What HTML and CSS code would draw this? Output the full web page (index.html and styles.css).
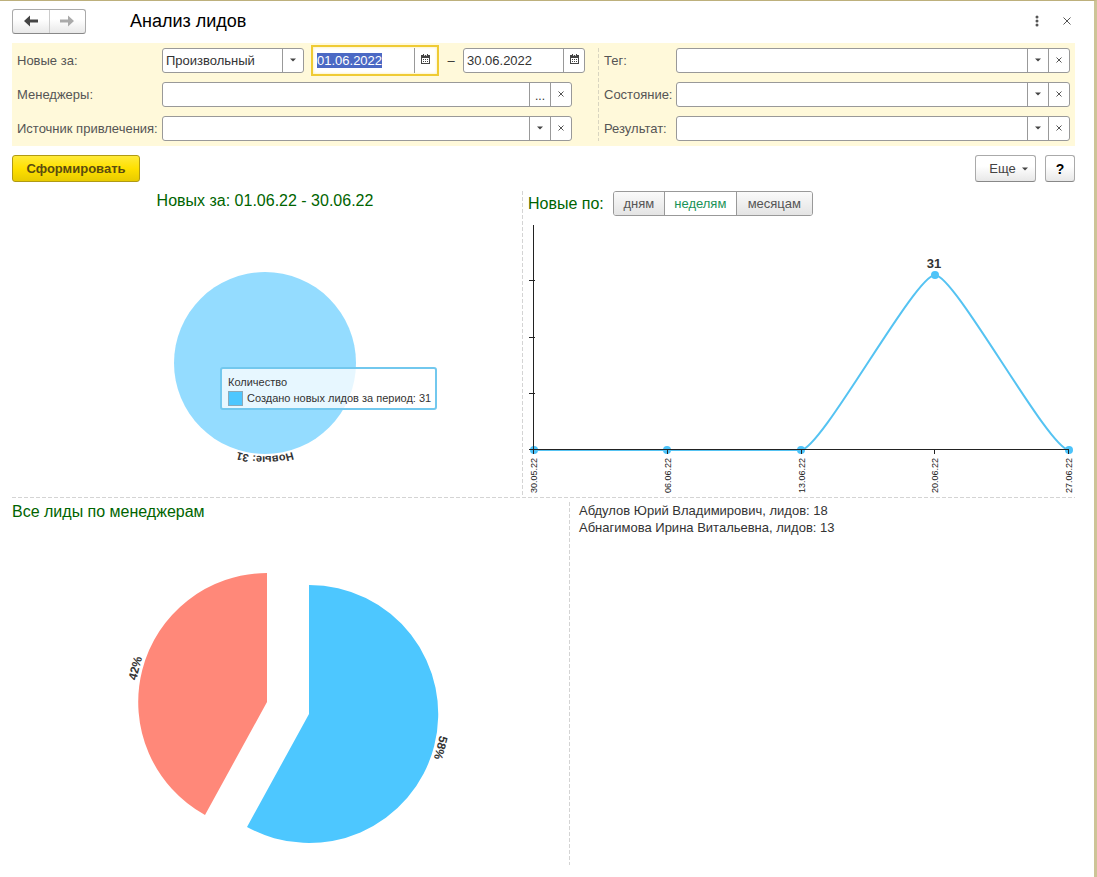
FILE: index.html
```
<!DOCTYPE html>
<html lang="ru">
<head>
  <meta charset="UTF-8" />
  <meta name="viewport" content="width=device-width, initial-scale=1" />
  <title>Анализ лидов</title>
  <link rel="stylesheet" href="styles.css">
</head>
<body>
  <!-- Icons -->
  <svg class="sprite" aria-hidden="true">
    <symbol id="i-down" viewBox="0 0 6 4"><path d="M0 0.5h6L3 3.5z" fill="#444" /></symbol>
    <symbol id="i-x" viewBox="0 0 6 6"><path d="M0.5 0.5l5 5M5.5 0.5l-5 5" stroke="#555" stroke-width="1" /></symbol>
    <symbol id="i-cal" viewBox="0 0 9 10">
      <path d="M0 1h9v9H0z" fill="#444" />
      <path d="M1 4h7v5H1z" fill="#fff" />
      <path d="M2 0h1v2H2zM6 0h1v2H6z" fill="#444" />
      <path d="M3 1h1v1H3zM5 1h1v1H5z" fill="#ccc" />
      <path d="M2 5h1v1H2zM4 5h1v1H4zM6 5h1v1H6zM2 7h1v1H2zM4 7h1v1H4zM6 7h1v1H6z" fill="#444" />
    </symbol>
    <symbol id="i-back" viewBox="0 0 14 12"><path d="M0 6L6 0.5V4.5H14V7.5H6V11.5z" fill="currentColor" /></symbol>
    <symbol id="i-forward" viewBox="0 0 14 12"><path d="M14 6L8 0.5V4.5H0V7.5H8V11.5z" fill="currentColor" /></symbol>
  </svg>

  <header class="header">
    <div class="nav">
      <button type="button" aria-label="Назад"><svg width="14" height="12"><use href="#i-back" /></svg></button>
      <button type="button" class="forward" aria-label="Вперед" disabled><svg width="14" height="12"><use href="#i-forward" /></svg></button>
    </div>
    <h1>Анализ лидов</h1>
    <button type="button" class="icon-btn" aria-label="Меню">
      <svg width="4" height="12" viewBox="0 0 4 12" fill="#555"><circle cx="2" cy="2" r="1.5" /><circle cx="2" cy="6" r="1.5" /><circle cx="2" cy="10" r="1.5" /></svg>
    </button>
    <button type="button" class="icon-btn" aria-label="Закрыть"><svg width="8" height="8" viewBox="0 0 8 8"><path d="M0.5 0.5l7 7M7.5 0.5l-7 7" stroke="#555" /></svg></button>
  </header>

  <!-- Filters -->
  <form class="filters">
    <div class="filter-col filter-left">
      <label for="period">Новые за:</label>
      <div class="period">
        <div class="field field-select">
          <select id="period"><option>Произвольный</option></select>
          <span class="cell"><svg width="6" height="4"><use href="#i-down" /></svg></span>
        </div>
        <div class="field field-date focused">
          <input type="text" id="date-from" value="01.06.2022" aria-label="Дата начала" />
          <button type="button" aria-label="Календарь"><svg width="9" height="10"><use href="#i-cal" /></svg></button>
        </div>
        <span class="dash">–</span>
        <div class="field field-date">
          <input type="text" value="30.06.2022" aria-label="Дата окончания" />
          <button type="button" aria-label="Календарь"><svg width="9" height="10"><use href="#i-cal" /></svg></button>
        </div>
      </div>

      <label for="managers">Менеджеры:</label>
      <div class="field field-wide">
        <input type="text" id="managers" />
        <button type="button" class="dots">...</button>
        <button type="button" aria-label="Очистить"><svg width="6" height="6"><use href="#i-x" /></svg></button>
      </div>

      <label for="source">Источник привлечения:</label>
      <div class="field field-wide">
        <input type="text" id="source" />
        <button type="button" aria-label="Выбрать"><svg width="6" height="4"><use href="#i-down" /></svg></button>
        <button type="button" aria-label="Очистить"><svg width="6" height="6"><use href="#i-x" /></svg></button>
      </div>
    </div>

    <div class="filter-col filter-right">
      <label for="tag">Тег:</label>
      <div class="field">
        <input type="text" id="tag" />
        <button type="button" aria-label="Выбрать"><svg width="6" height="4"><use href="#i-down" /></svg></button>
        <button type="button" aria-label="Очистить"><svg width="6" height="6"><use href="#i-x" /></svg></button>
      </div>

      <label for="state">Состояние:</label>
      <div class="field">
        <input type="text" id="state" />
        <button type="button" aria-label="Выбрать"><svg width="6" height="4"><use href="#i-down" /></svg></button>
        <button type="button" aria-label="Очистить"><svg width="6" height="6"><use href="#i-x" /></svg></button>
      </div>

      <label for="result">Результат:</label>
      <div class="field">
        <input type="text" id="result" />
        <button type="button" aria-label="Выбрать"><svg width="6" height="4"><use href="#i-down" /></svg></button>
        <button type="button" aria-label="Очистить"><svg width="6" height="6"><use href="#i-x" /></svg></button>
      </div>
    </div>
  </form>

  <div class="toolbar">
    <button type="button" class="btn primary">Сформировать</button>
    <button type="button" class="btn more">Еще <svg width="6" height="4"><use href="#i-down" /></svg></button>
    <button type="button" class="btn help">?</button>
  </div>

  <main>
    <!-- New leads -->
    <section class="row row-new">
      <div class="panel-pie">
        <h2>Новых за: 01.06.22 - 30.06.22</h2>
        <div class="pie-box">
          <svg class="chart" viewBox="0 0 506 280" role="img" aria-label="Новые: 31">
            <path id="pie-edge" d="M253 59a93 93 0 0 1 0 186a93 93 0 0 1 0 -186" fill="none" />
            <circle cx="253" cy="152" r="91" fill="#94dcff" />
            <text class="pie-label small"><textPath href="#pie-edge" startOffset="50%">Новые: 31</textPath></text>
          </svg>
          <div class="tooltip">
            <div>Количество</div>
            <div class="tooltip-line"><span class="swatch"></span>Создано новых лидов за период: 31</div>
          </div>
        </div>
      </div>

      <div class="panel-line">
        <div class="line-head">
          <h2>Новые по:</h2>
          <div class="switch">
            <button type="button">дням</button>
            <button type="button" class="active">неделям</button>
            <button type="button">месяцам</button>
          </div>
        </div>
        <svg class="chart" viewBox="0 0 547 270" role="img" aria-label="Новые по неделям">
          <g fill="#4cc3fa">
            <circle cx="6" cy="225" r="4" />
            <circle cx="139" cy="225" r="4" />
            <circle cx="273" cy="225" r="4" />
            <circle cx="407" cy="50" r="4" />
            <circle cx="541" cy="225" r="4" />
          </g>
          <path class="series" d="M6 225H273C293 225 387 50 407 50S521 225 541 225" />
          <path class="axis" d="M5.5 0V229M1 224.5H541M1 55.5H7M1 112.5H7M1 168.5H7M139.5 224V229M273.5 224V229M406.5 224V229M540.5 224V229" />
          <text class="value" x="406" y="43">31</text>
          <g class="ticks">
            <text transform="translate(9 233) rotate(-90)">30.05.22</text>
            <text transform="translate(143 233) rotate(-90)">06.06.22</text>
            <text transform="translate(277 233) rotate(-90)">13.06.22</text>
            <text transform="translate(410 233) rotate(-90)">20.06.22</text>
            <text transform="translate(544 233) rotate(-90)">27.06.22</text>
          </g>
        </svg>
      </div>
    </section>

    <!-- Leads by manager -->
    <section class="row row-managers">
      <div class="panel-share">
        <h2>Все лиды по менеджерам</h2>
        <svg class="chart" viewBox="0 0 557 343" role="img" aria-label="Доли менеджеров: 58% и 42%">
          <path d="M297 192V63A129 129 0 1 1 235 305z" fill="#4dc7ff" />
          <path d="M255 180V51A129 129 0 0 0 193 293z" fill="#ff8879" />
          <text class="pie-label" transform="translate(297 192) rotate(104.4) translate(0 -132)">58%</text>
          <text class="pie-label" transform="translate(255 180) rotate(284.4) translate(0 -132)">42%</text>
        </svg>
      </div>
      <ul class="managers">
        <li>Абдулов Юрий Владимирович, лидов: 18</li>
        <li>Абнагимова Ирина Витальевна, лидов: 13</li>
      </ul>
    </section>
  </main>

  <script>
    // Start with the first date ready for typing
    const dateFrom = document.getElementById("date-from");
    dateFrom.focus();
    dateFrom.select();
  </script>
</body>
</html>
```
FILE: styles.css
```
* {
  margin: 0;
  padding: 0;
  box-sizing: border-box;
}

body {
  min-height: 100vh;
  padding: 0 19px 12px 12px;
  border-top: 1px solid #bdb07c;
  border-right: 3px solid #cdc497;
  background: #fff;
  color: #333;
  font-family: "Liberation Sans", Arial, sans-serif;
  font-size: 13px;
}

button,
input,
select {
  font: inherit;
  color: inherit;
}

button {
  cursor: pointer;
}

.sprite {
  display: none;
}

/* Header */
.header {
  display: flex;
  align-items: center;
  height: 42px;
  padding: 0 2px 2px 0;
}

.nav {
  display: flex;
  width: 74px;
  height: 25px;
  border: 1px solid #aaa;
  border-bottom-color: #888;
  border-radius: 3px;
  background: linear-gradient(#fff 40%, #e8e8e8);
}

.nav button {
  flex: 1;
  border: none;
  background: none;
  color: #444;
  line-height: 0;
}

.nav .forward {
  border-left: 1px solid #ccc;
  color: #aaa;
}

h1 {
  flex: 1;
  margin-left: 44px;
  color: #000;
  font-size: 18px;
  font-weight: normal;
}

.icon-btn {
  width: 12px;
  height: 20px;
  margin-left: 18px;
  border: none;
  background: none;
  line-height: 0;
}

/* Filters */
.filters {
  display: flex;
  gap: 12px;
  padding: 5px;
  background: #fff9da;
}

.filter-col {
  display: grid;
  align-items: center;
  row-gap: 9px;
}

.filter-left {
  grid-template-columns: 145px auto;
}

.filter-right {
  position: relative;
  flex: 1;
  grid-template-columns: 72px 1fr;
  margin-left: 7px;
}

.filter-right::before {
  content: "";
  position: absolute;
  left: -6px;
  width: 1px;
  height: 100%;
  background: repeating-linear-gradient(#d9d5c0 0 4px, transparent 4px 6px);
}

.filters label {
  color: #555;
  white-space: nowrap;
}

.period {
  display: flex;
  align-items: center;
  height: 25px;
}

.field {
  display: flex;
  height: 25px;
  border: 1px solid #999;
  border-radius: 3px;
  background: #fff;
}

.field input,
.field select {
  flex: 1;
  min-width: 0;
  padding: 0 3px;
  border: none;
  outline: none;
  background: none;
  appearance: none;
}

.field button,
.field .cell {
  display: flex;
  align-items: center;
  justify-content: center;
  width: 21px;
  padding-bottom: 2px;
  border: none;
  border-left: 1px solid #999;
  background: none;
}

.field .dots {
  padding: 2px 0 0;
  font-size: 12px;
}

.field-wide {
  width: 410px;
}

.field-select {
  width: 142px;
}

.field-date {
  width: 122px;
}

.field-date button {
  padding-bottom: 3px;
}

.field-date.focused {
  width: 128px;
  height: 31px;
  margin-left: 7px;
  padding: 1px 2px 1px 1px;
  border: 2px solid #efcb34;
  border-radius: 0;
  box-shadow: inset 0 0 3px #fbeaa0;
}

::selection {
  background: #4b69c4;
  color: #fff;
}

.dash {
  width: 24px;
  text-align: center;
}

/* Toolbar */
.toolbar {
  display: flex;
  gap: 9px;
  padding: 9px 0;
}

.btn {
  height: 27px;
  border: 1px solid #aaa;
  border-bottom-color: #888;
  border-radius: 3px;
  background: linear-gradient(#fff 40%, #e8e8e8);
  color: #444;
}

.primary {
  width: 128px;
  margin-right: auto;
  border-color: #b09a14;
  background: linear-gradient(#ffea3a, #ffe000 50%, #e8cb00);
  color: #5a4c10;
  font-weight: bold;
}

.more {
  display: flex;
  align-items: center;
  justify-content: center;
  gap: 6px;
  width: 61px;
  padding-left: 6px;
}

.help {
  width: 30px;
  color: #000;
  font-size: 14px;
  font-weight: bold;
}

/* Charts */
h2 {
  color: #006400;
  font-size: 16px;
  font-weight: normal;
  line-height: 20px;
}

.row {
  display: grid;
}

.row-new {
  grid-template-columns: 511fr 552fr;
  padding-bottom: 3px;
  background: repeating-linear-gradient(90deg, #d4d4d4 0 4px, transparent 4px 6px) bottom / 100% 1px no-repeat;
}

.row-managers {
  grid-template-columns: 558fr 505fr;
  padding-top: 4px;
}

.panel-pie,
.panel-share {
  background: repeating-linear-gradient(#d4d4d4 0 4px, transparent 4px 6px) right / 1px 100% no-repeat;
}

.panel-pie {
  padding-right: 5px;
}

.panel-pie h2 {
  text-align: center;
}

.panel-share {
  padding-right: 1px;
}

.panel-line {
  padding-left: 5px;
}

.chart {
  display: block;
  width: 100%;
}

.pie-box {
  position: relative;
}

.pie-label {
  fill: #333;
  font-size: 12px;
  font-weight: bold;
  text-anchor: middle;
}

.pie-label.small {
  font-size: 11px;
}

.tooltip {
  position: absolute;
  top: 156px;
  left: 208px;
  padding: 5px 4px 2px 6px;
  border: 2px solid #72c8ee;
  border-radius: 3px;
  background: rgba(255, 255, 255, 0.78);
  font-size: 11px;
  line-height: 16px;
  white-space: nowrap;
}

.tooltip-line {
  display: flex;
  align-items: center;
  gap: 4px;
}

.swatch {
  width: 15px;
  height: 15px;
  border: 1px solid #8ba9b8;
  background: #4dc7ff;
}

.line-head {
  display: flex;
  align-items: center;
  gap: 9px;
  margin-bottom: 9px;
}

.switch {
  display: grid;
  grid-template-columns: 50px 72px 76px;
  height: 25px;
  border: 1px solid #999;
  border-radius: 3px;
  overflow: hidden;
}

.switch button {
  border: none;
  background: linear-gradient(#fafafa, #e4e4e4);
  color: #555;
}

.switch button + button {
  border-left: 1px solid #999;
}

.switch .active {
  background: #fff;
  color: #1a9257;
}

.series {
  fill: none;
  stroke: #55c3f2;
  stroke-width: 2;
}

.axis {
  fill: none;
  stroke: #222;
  stroke-width: 1;
}

.value {
  fill: #333;
  font-size: 13px;
  font-weight: bold;
  text-anchor: middle;
}

.ticks {
  fill: #222;
  font-size: 9px;
  text-anchor: end;
}

.managers {
  padding-left: 9px;
  list-style: none;
  line-height: 17px;
}
```
